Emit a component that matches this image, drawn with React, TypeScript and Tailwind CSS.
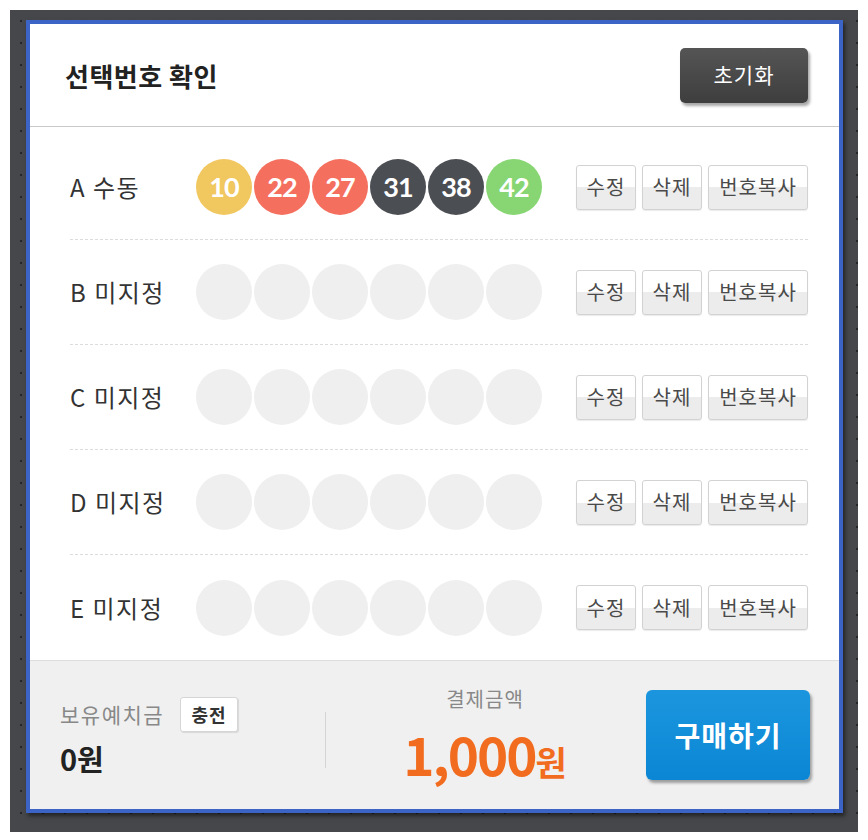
const balls = [
  { n: 10, c: 'bg-[#f1c760]' },
  { n: 22, c: 'bg-[#f46f5e]' },
  { n: 27, c: 'bg-[#f46f5e]' },
  { n: 31, c: 'bg-[#4b4e53]' },
  { n: 38, c: 'bg-[#4b4e53]' },
  { n: 42, c: 'bg-[#88d673]' },
]

const rows = [
  { key: 'A', label: '수동', filled: true },
  { key: 'B', label: '미지정', filled: false },
  { key: 'C', label: '미지정', filled: false },
  { key: 'D', label: '미지정', filled: false },
  { key: 'E', label: '미지정', filled: false },
]

function SmallButton({ children, wide }: { children: string; wide?: boolean }) {
  return (
    <button
      className={`h-[45px] ${wide ? 'w-[100px]' : 'w-[60px]'} rounded-[3px] border border-[#d2d2d2] bg-gradient-to-b from-white from-50% to-[#ececec] to-50% text-[20px] tracking-[1px] text-[#4a4a4a] shadow-[0_1px_1px_rgba(0,0,0,0.08)]`}
    >
      {children}
    </button>
  )
}

export default function App() {
  return (
    <div className="w-[868px] h-[840px] bg-white pt-[10px] pl-[10px] font-['Noto_Sans_CJK_KR','Noto_Sans',sans-serif]">
      <div className="w-[848px] h-[822px] bg-[#45474a] bg-[radial-gradient(#262626_1px,transparent_1.6px)] bg-[length:22px_22px] pt-[10px] pl-[16px]">
        <div className="w-[817px] h-[793px] border-[4px] border-[#3c63c6] bg-white flex flex-col shadow-[2px_3px_4px_rgba(0,0,0,0.5)]">
          {/* Header */}
          <div className="h-[103px] shrink-0 flex items-center justify-between pl-[35px] pr-[31px] border-b border-[#c9c9c9]">
            <h1 className="text-[26px] font-bold text-[#222] tracking-[0.5px]">선택번호 확인</h1>
            <button className="w-[128px] h-[55px] rounded-[5px] bg-gradient-to-b from-[#555] to-[#3e3e3e] text-white text-[21px] tracking-[1px] shadow-[2px_3px_3px_rgba(0,0,0,0.35)]">
              초기화
            </button>
          </div>

          {/* Rows */}
          <div className="flex-1 pt-[8px] pl-[40px] pr-[31px]">
            {rows.map((row, i) => (
              <div
                key={row.key}
                className={`h-[105px] flex items-center ${i < rows.length - 1 ? 'border-b border-dashed border-[#dcdcdc]' : ''}`}
              >
                <div className="w-[126px] text-[24px] text-[#333] tracking-[1.5px]">
                  {row.key} {row.label}
                </div>
                <div className="flex gap-[2px]">
                  {row.filled
                    ? balls.map((b) => (
                        <div
                          key={b.n}
                          className={`w-[56px] h-[56px] rounded-full ${b.c} flex items-center justify-center text-white text-[27px] font-bold font-['Lato',sans-serif] tracking-[-1px]`}
                        >
                          {b.n}
                        </div>
                      ))
                    : balls.map((b) => (
                        <div key={b.n} className="w-[56px] h-[56px] rounded-full bg-[#efefef]" />
                      ))}
                </div>
                <div className="ml-auto flex gap-[6px]">
                  <SmallButton>수정</SmallButton>
                  <SmallButton>삭제</SmallButton>
                  <SmallButton wide>번호복사</SmallButton>
                </div>
              </div>
            ))}
          </div>

          {/* Footer */}
          <div className="h-[149px] shrink-0 bg-[#f0f0f0] border-t border-[#dedede] flex items-center pl-[30px] pr-[29px]">
            <div className="w-[265px] flex flex-col gap-[12px]">
              <div className="flex items-center gap-[16px]">
                <span className="text-[21px] text-[#888] tracking-[1.5px]">보유예치금</span>
                <button className="w-[58px] h-[35px] rounded-[3px] border border-[#d6d6d6] bg-white text-[18px] font-bold text-[#333] tracking-[1px] shadow-[1px_1px_1px_rgba(0,0,0,0.1)]">
                  충전
                </button>
              </div>
              <div className="text-[29px] font-bold text-[#222] leading-none">0원</div>
            </div>
            <div className="w-px h-[56px] bg-[#d4d4d4] mt-[10px]" />
            <div className="flex-1 flex flex-col items-center gap-[17px] mr-[2px] mt-[4px]">
              <span className="text-[20px] text-[#888] tracking-[1px] leading-[24px]">결제금액</span>
              <div className="flex items-baseline text-[#f26c1f] font-bold leading-[50px]">
                <span className="text-[53px] tracking-[-2px]">1,000</span>
                <span className="text-[34px]">원</span>
              </div>
            </div>
            <button className="w-[164px] h-[90px] rounded-[6px] bg-gradient-to-b from-[#1b96de] to-[#0a86d4] text-white text-[28px] font-bold tracking-[1px] shadow-[2px_3px_3px_rgba(0,0,0,0.35)]">
              구매하기
            </button>
          </div>
        </div>
      </div>
    </div>
  )
}
